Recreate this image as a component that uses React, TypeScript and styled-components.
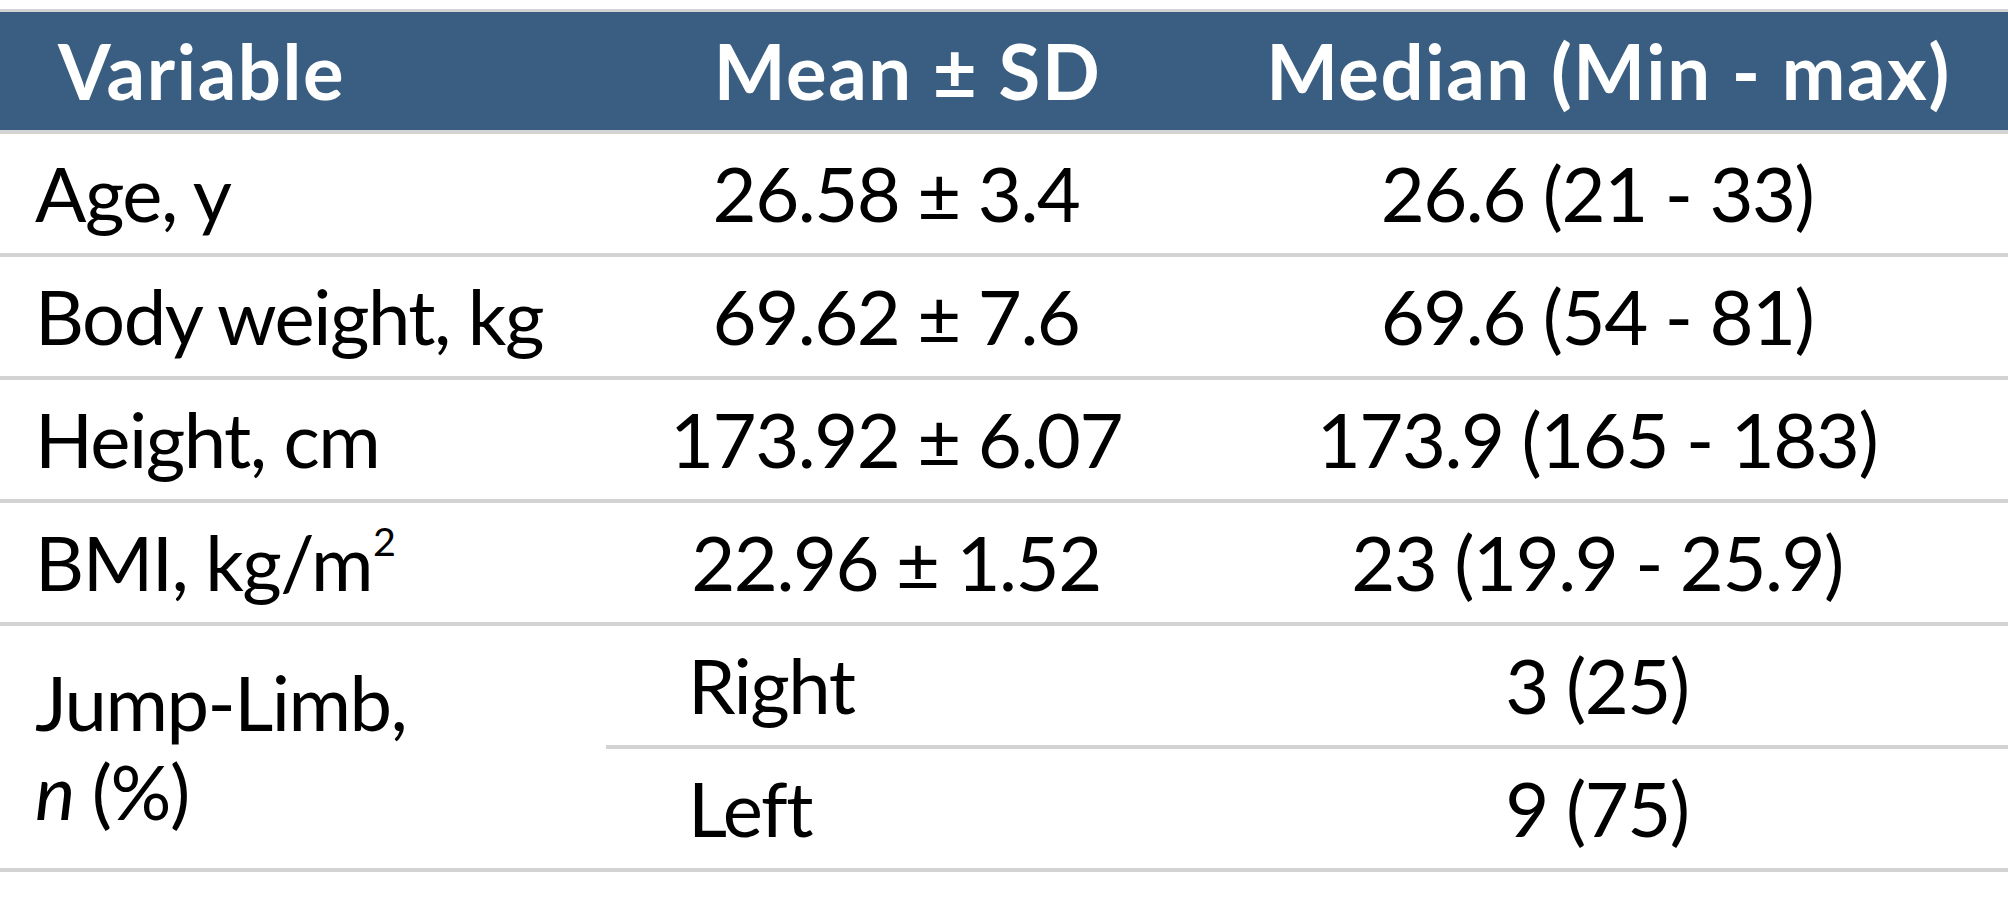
import React from "react";
import styled, { createGlobalStyle } from "styled-components";

const Global = createGlobalStyle`
  html, body { margin: 0; padding: 0; background: #ffffff; }
  body { font-family: Lato, "Open Sans", sans-serif; color: #000; }
`;

const Page = styled.div`
  padding-top: 9px;
`;

const Table = styled.div`
  display: grid;
  grid-template-columns: 606px 580px 1fr;
  width: 2008px;
  border-top: 3px solid #d3d3d3;
`;

const HeadCell = styled.div<{ $align?: "left" | "center" }>`
  height: 122px;
  box-sizing: border-box;
  background: #3a5e81;
  border-bottom: 4px solid #d3d3d3;
  color: #fff;
  font-weight: 700;
  font-size: 76px;
  letter-spacing: 1.6px;
  display: flex;
  align-items: center;
  justify-content: ${(p) => (p.$align === "left" ? "flex-start" : "center")};
  padding: 0 35px 2px 58px;
  white-space: nowrap;
`;

const Cell = styled.div<{ $align?: "left" | "center" | "sub"; $span?: number }>`
  height: ${(p) => (p.$span ? 123 * p.$span : 123)}px;
  grid-row: ${(p) => (p.$span ? `span ${p.$span}` : "auto")};
  box-sizing: border-box;
  border-bottom: 4px solid #d3d3d3;
  font-size: 76px;
  font-weight: 400;
  letter-spacing: -1.5px;
  display: flex;
  align-items: center;
  justify-content: ${(p) => (p.$align === "center" ? "center" : "flex-start")};
  padding: ${(p) =>
    p.$align === "sub" ? "0 0 2px 82px" : p.$align === "center" ? "0 0 2px" : "0 0 2px 35px"};
  white-space: nowrap;
  line-height: 89px;
`;

const Stack = styled.div`
  display: flex;
  flex-direction: column;
`;

const Sup = styled.sup`
  font-size: 0.52em;
  line-height: 0;
  vertical-align: 0;
  position: relative;
  top: -21px;
  margin-left: 1px;
`;

const rows: [React.ReactNode, string, string][] = [
  ["Age, y", "26.58 ± 3.4", "26.6 (21 - 33)"],
  ["Body weight, kg", "69.62 ± 7.6", "69.6 (54 - 81)"],
  ["Height, cm", "173.92 ± 6.07", "173.9 (165 - 183)"],
  [
    <>
      BMI, kg/m<Sup>2</Sup>
    </>,
    "22.96 ± 1.52",
    "23 (19.9 - 25.9)",
  ],
];

export default function App() {
  return (
    <Page>
      <Global />
      <Table>
        <HeadCell $align="left">Variable</HeadCell>
        <HeadCell>Mean ± SD</HeadCell>
        <HeadCell>Median (Min - max)</HeadCell>
        {rows.map(([a, b, c], i) => (
          <React.Fragment key={i}>
            <Cell>{a}</Cell>
            <Cell $align="center">{b}</Cell>
            <Cell $align="center">{c}</Cell>
          </React.Fragment>
        ))}
        <Cell $span={2}>
          <Stack>
            <span>Jump-Limb,</span>
            <span>
              <i>n</i> (%)
            </span>
          </Stack>
        </Cell>
        <Cell $align="sub">Right</Cell>
        <Cell $align="center">3 (25)</Cell>
        <Cell $align="sub">Left</Cell>
        <Cell $align="center">9 (75)</Cell>
      </Table>
    </Page>
  );
}
